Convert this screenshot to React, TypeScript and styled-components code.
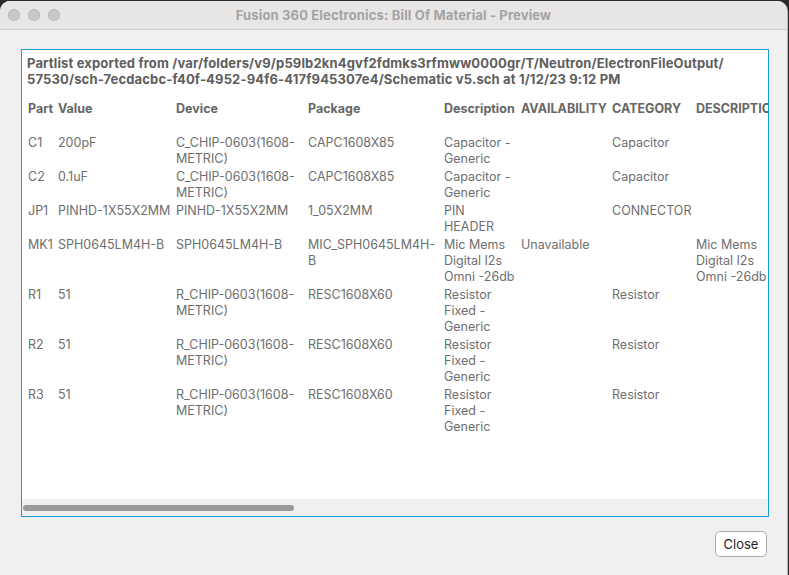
import React from "react";
import styled, { createGlobalStyle } from "styled-components";

const Global = createGlobalStyle`
  html, body { margin: 0; padding: 0; background: #2b2b2e; }
  body { width: 789px; height: 575px; overflow: hidden; font-family: Inter, "Noto Sans", sans-serif; }
`;

const Window = styled.div`
  width: 787px;
  height: 574px;
  margin-top: 1px;
  background: #f0f0f0;
  border-radius: 10px 10px 0 0;
  overflow: hidden;
  display: flex;
  flex-direction: column;
  box-shadow: 1px 0 0 #b8b8b8;
`;

const TitleBar = styled.div`
  height: 28px;
  flex: none;
  background: #e8e6e5;
  border-bottom: 1px solid #cbcbcb;
  display: flex;
  align-items: center;
  position: relative;
`;

const Lights = styled.div`
  display: flex;
  gap: 8px;
  padding-left: 8px;
`;

const Light = styled.span`
  width: 12px;
  height: 12px;
  border-radius: 50%;
  background: #c8c7c6;
  box-shadow: inset 0 0 0 0.5px #b3b2b1;
`;

const Title = styled.div`
  position: absolute;
  left: 0;
  right: 0;
  text-align: center;
  font-size: 13px;
  font-weight: 700;
  color: #a3a3a3;
  letter-spacing: 0.15px;
`;

const Body = styled.div`
  flex: 1;
  display: flex;
  flex-direction: column;
  padding: 19px 19px 0 21px;
`;

const Frame = styled.div`
  width: 746px;
  height: 466px;
  border: 1px solid #1b9ad6;
  background: #fff;
  display: flex;
  flex-direction: column;
  overflow: hidden;
`;

const Viewport = styled.div`
  flex: 1;
  overflow: hidden;
  padding: 5px 0 0 5px;
  color: #6a6a6a;
  font-size: 12.5px;
  line-height: 16px;
`;

const Heading = styled.div`
  font-weight: 700;
  font-size: 13px;
  letter-spacing: 0.15px;
  color: #5e5e5e;
  white-space: pre;
  margin-bottom: 14px;
`;

const Row = styled.div<{ $header?: boolean }>`
  display: grid;
  grid-template-columns: 30px 118px 132px 136px 77px 91px 84px 140px;
  width: 808px;
  padding-left: 1px;
  padding-bottom: 2px;
  min-height: ${(p) => (p.$header ? "32px" : "0")};
  font-weight: ${(p) => (p.$header ? 700 : 400)};
  color: ${(p) => (p.$header ? "#666" : "#6e6e6e")};
`;

const Cell = styled.div`
  white-space: pre;
  overflow: hidden;
`;

const ScrollBand = styled.div`
  height: 17px;
  flex: none;
  background: #f0f0f0;
  display: flex;
  align-items: center;
  padding-left: 1px;
`;

const Thumb = styled.div`
  width: 271px;
  height: 6px;
  border-radius: 3px;
  background: #9a9a9a;
`;

const Footer = styled.div`
  display: flex;
  justify-content: flex-end;
  padding-top: 14px;
`;

const Button = styled.button`
  width: 52px;
  height: 26px;
  border: 1px solid #a9a9a9;
  border-radius: 5px;
  background: #fff;
  color: #1e1e1e;
  font-family: Inter, "Noto Sans", sans-serif;
  font-size: 13px;
  padding: 0;
  margin-right: 1px;
`;

const headers = ["Part", "Value", "Device", "Package", "Description", "AVAILABILITY", "CATEGORY", "DESCRIPTION"];

const rows: string[][] = [
  ["C1", "200pF", "C_CHIP-0603(1608-\nMETRIC)", "CAPC1608X85", "Capacitor -\nGeneric", "", "Capacitor", ""],
  ["C2", "0.1uF", "C_CHIP-0603(1608-\nMETRIC)", "CAPC1608X85", "Capacitor -\nGeneric", "", "Capacitor", ""],
  ["JP1", "PINHD-1X55X2MM", "PINHD-1X55X2MM", "1_05X2MM", "PIN\nHEADER", "", "CONNECTOR", ""],
  ["MK1", "SPH0645LM4H-B", "SPH0645LM4H-B", "MIC_SPH0645LM4H-\nB", "Mic Mems\nDigital I2s\nOmni -26db", "Unavailable", "", "Mic Mems\nDigital I2s\nOmni -26db"],
  ["R1", "51", "R_CHIP-0603(1608-\nMETRIC)", "RESC1608X60", "Resistor\nFixed -\nGeneric", "", "Resistor", ""],
  ["R2", "51", "R_CHIP-0603(1608-\nMETRIC)", "RESC1608X60", "Resistor\nFixed -\nGeneric", "", "Resistor", ""],
  ["R3", "51", "R_CHIP-0603(1608-\nMETRIC)", "RESC1608X60", "Resistor\nFixed -\nGeneric", "", "Resistor", ""],
];

export default function App() {
  return (
    <>
      <Global />
      <Window>
        <TitleBar>
          <Lights>
            <Light />
            <Light />
            <Light />
          </Lights>
          <Title>Fusion 360 Electronics: Bill Of Material - Preview</Title>
        </TitleBar>
        <Body>
          <Frame>
            <Viewport>
              <Heading>
                {"Partlist exported from /var/folders/v9/p59lb2kn4gvf2fdmks3rfmww0000gr/T/Neutron/ElectronFileOutput/\n57530/sch-7ecdacbc-f40f-4952-94f6-417f945307e4/Schematic v5.sch at 1/12/23 9:12 PM"}
              </Heading>
              <Row $header>
                {headers.map((h) => (
                  <Cell key={h}>{h}</Cell>
                ))}
              </Row>
              {rows.map((r) => (
                <Row key={r[0]}>
                  {r.map((c, i) => (
                    <Cell key={i}>{c}</Cell>
                  ))}
                </Row>
              ))}
            </Viewport>
            <ScrollBand>
              <Thumb />
            </ScrollBand>
          </Frame>
          <Footer>
            <Button>Close</Button>
          </Footer>
        </Body>
      </Window>
    </>
  );
}
